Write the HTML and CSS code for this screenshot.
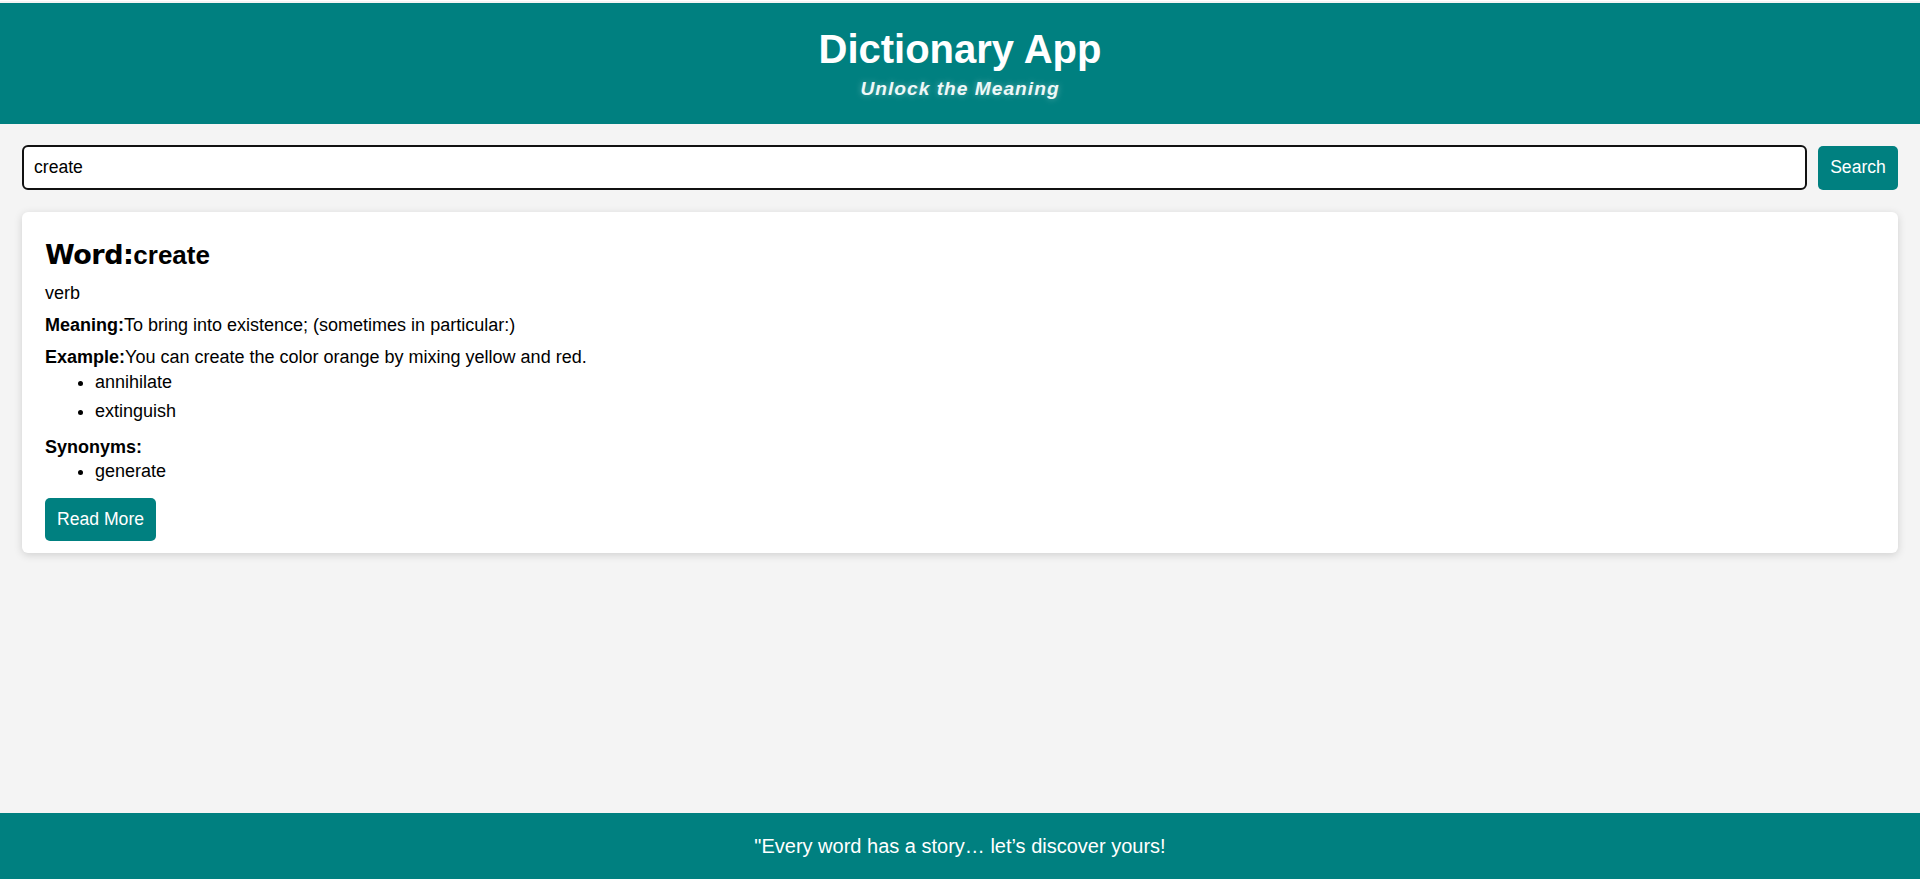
FILE: index.html
```html
<!DOCTYPE html>
<html lang="en">
<head>
<meta charset="utf-8">
<title>Dictionary App</title>
<link rel="stylesheet" href="styles.css">
</head>
<body>
  <header class="site-header">
    <h1 class="title">Dictionary App</h1>
    <p class="tagline">Unlock the Meaning</p>
  </header>
  <main class="main">
    <div class="search-row">
      <input class="search-input" type="text" value="create">
      <button class="search-btn">Search</button>
    </div>
    <section class="card">
      <h2 class="word"><strong class="word-label">Word:</strong>create</h2>
      <p class="pos">verb</p>
      <p class="line"><strong>Meaning:</strong>To bring into existence; (sometimes in particular:)</p>
      <p class="line example"><strong>Example:</strong>You can create the color orange by mixing yellow and red.</p>
      <ul class="list antonyms">
        <li>annihilate</li>
        <li>extinguish</li>
      </ul>
      <p class="line syn-label"><strong>Synonyms:</strong></p>
      <ul class="list synonyms">
        <li>generate</li>
      </ul>
      <button class="more-btn">Read More</button>
    </section>
  </main>
  <footer class="site-footer">
    <p class="quote">"Every word has a story… let’s discover yours!</p>
  </footer>
</body>
</html>
```

FILE: styles.css
```css
* { box-sizing: border-box; }

html, body { height: 100%; }

body {
  margin: 0;
  padding-top: 2px;
  min-height: 100vh;
  display: flex;
  flex-direction: column;
  background: #f4f4f4;
  color: #000;
  font-family: "Liberation Sans", Arial, sans-serif;
  font-size: 18px;
  border-top: 1px solid #fff;
}

.site-header {
  background: #008080;
  color: #fff;
  text-align: center;
  padding: 23px 0 24px;
}

.title {
  margin: 0 0 6px;
  font-size: 40px;
  line-height: 46px;
  font-weight: bold;
}

.tagline {
  margin: 0;
  font-size: 19.2px;
  line-height: 22px;
  font-weight: bold;
  font-style: italic;
  letter-spacing: 1px;
  color: #eef8f8;
  text-shadow: 0 0 6px rgba(255, 255, 255, 0.35);
}

.main {
  flex: 1;
  padding: 21px 22px 0;
}

.search-row {
  display: flex;
  align-items: center;
  gap: 11px;
}

.search-input {
  flex: 1;
  height: 45px;
  border: 2px solid #111;
  border-radius: 6px;
  padding: 0 10px;
  font-family: "Liberation Sans", Arial, sans-serif;
  font-size: 17.6px;
  color: #000;
  background: #fff;
  outline: none;
}

.search-btn {
  width: 80px;
  height: 44px;
  border: none;
  border-radius: 5px;
  background: #008080;
  color: #fff;
  font-family: "Liberation Sans", Arial, sans-serif;
  font-size: 17.6px;
  padding: 0;
}

.card {
  margin-top: 22px;
  background: #fff;
  border-radius: 6px;
  box-shadow: 0 2px 8px rgba(0, 0, 0, 0.15);
  padding: 28px 23px 12px;
}

.word {
  margin: 0 0 13px;
  font-size: 26px;
  line-height: 30px;
  font-weight: bold;
}

.word-label {
  font-family: "DejaVu Sans", "Liberation Sans", sans-serif;
  font-size: 27px;
  font-weight: bold;
  letter-spacing: -0.5px;
}

.pos,
.line {
  margin: 0 0 11px;
  line-height: 21px;
}

.line.example { margin-bottom: 4px; }
.line.syn-label { margin-bottom: 3px; }

.list {
  margin: 0;
  padding-left: 50px;
}

.list li {
  line-height: 21px;
  margin-bottom: 8px;
}

.list.antonyms { margin-bottom: 15px; }
.list.synonyms { margin-bottom: 16px; }

.more-btn {
  display: block;
  border: none;
  border-radius: 5px;
  background: #008080;
  color: #fff;
  font-family: "Liberation Sans", Arial, sans-serif;
  font-size: 17.6px;
  line-height: 21px;
  padding: 11px 12px;
}

.site-footer {
  background: #008080;
  color: #fff;
  text-align: center;
  padding: 22px 0;
}

.quote {
  margin: 0;
  font-size: 20px;
  line-height: 22px;
}
```
